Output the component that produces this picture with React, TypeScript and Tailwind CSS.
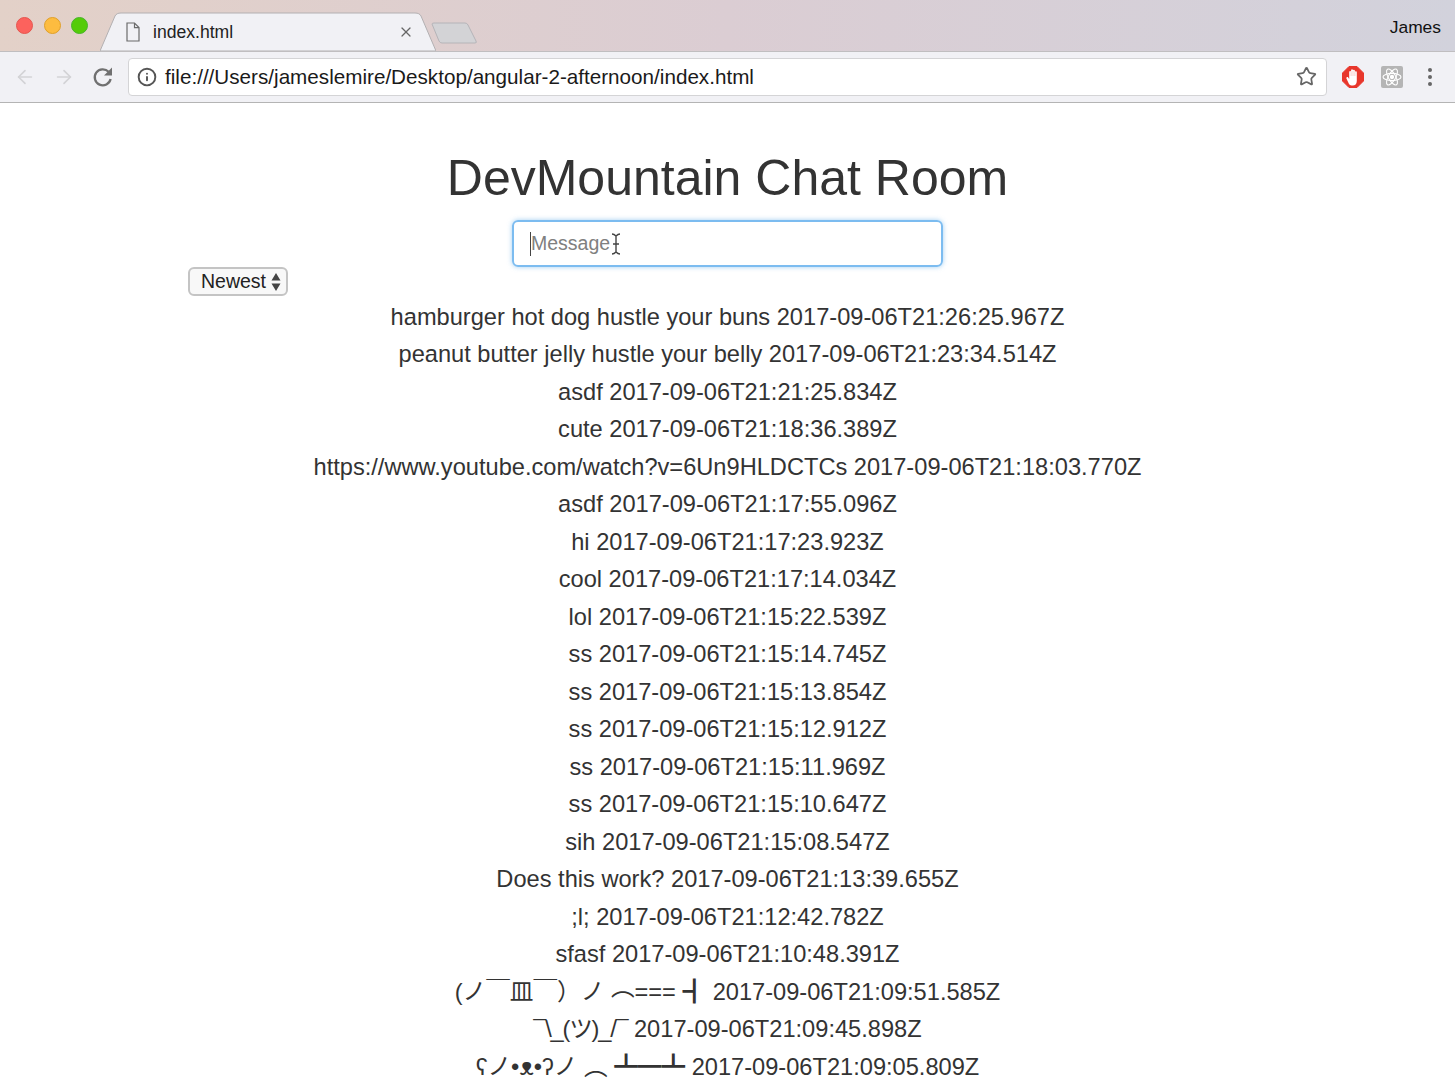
import { ArrowLeft, ArrowRight, Info, Star, X } from "lucide-react";

const messages = [
  "hamburger hot dog hustle your buns 2017-09-06T21:26:25.967Z",
  "peanut butter jelly hustle your belly 2017-09-06T21:23:34.514Z",
  "asdf 2017-09-06T21:21:25.834Z",
  "cute 2017-09-06T21:18:36.389Z",
  "https://www.youtube.com/watch?v=6Un9HLDCTCs 2017-09-06T21:18:03.770Z",
  "asdf 2017-09-06T21:17:55.096Z",
  "hi 2017-09-06T21:17:23.923Z",
  "cool 2017-09-06T21:17:14.034Z",
  "lol 2017-09-06T21:15:22.539Z",
  "ss 2017-09-06T21:15:14.745Z",
  "ss 2017-09-06T21:15:13.854Z",
  "ss 2017-09-06T21:15:12.912Z",
  "ss 2017-09-06T21:15:11.969Z",
  "ss 2017-09-06T21:15:10.647Z",
  "sih 2017-09-06T21:15:08.547Z",
  "Does this work? 2017-09-06T21:13:39.655Z",
  ";l; 2017-09-06T21:12:42.782Z",
  "sfasf 2017-09-06T21:10:48.391Z",
];

function TabShape() {
  return (
    <svg className="absolute inset-0" width="336" height="39" viewBox="0 0 336 39">
      <path
        d="M0 39 L15 4 C16 2 18 1 21 1 L315 1 C318 1 320 2 321 4 L336 39 Z"
        fill="#f1f1f5"
        stroke="#b3b0b2"
      />
    </svg>
  );
}

function ReloadIcon() {
  return (
    <svg width="24" height="24" viewBox="0 0 24 24" fill="none">
      <path d="M17.6 6.8 A8 8 0 1 0 19.6 14" stroke="#707070" strokeWidth="2.3" />
      <path d="M21 2.5 V10.5 H13 Z" fill="#707070" />
    </svg>
  );
}

function AdblockIcon() {
  return (
    <svg width="22" height="22" viewBox="0 0 22 22">
      <path d="M7 0.5 H15 L21.5 7 V15 L15 21.5 H7 L0.5 15 V7 Z" fill="#e8372c" stroke="#e8372c" strokeLinejoin="round" />
      <path
        d="M7 18 L4.4 12.4 C4 11.2 5.6 10.4 6.2 11.4 L7.2 13 V6 C7.2 4.8 9 4.8 9.1 6 V4.2 C9.1 3 10.9 3 11 4.2 V4.6 C11.1 3.6 12.8 3.6 12.9 4.8 V6 C13 5 14.8 5 14.8 6.2 V15 C14.8 18 13 19.6 10.8 19.6 C9 19.6 7.8 19.2 7 18 Z"
        fill="#ffffff"
      />
      <path d="M9.1 6 V10 M11 5 V10 M12.9 6 V10" stroke="#f0a09a" strokeWidth="0.5" />
    </svg>
  );
}

function ReactIcon() {
  return (
    <div className="flex h-[22px] w-[22px] items-center justify-center rounded-[2px] bg-[#b5b5b5]">
      <svg width="20" height="20" viewBox="0 0 20 20" fill="none" stroke="#ffffff" strokeWidth="1.1">
        <ellipse cx="10" cy="10" rx="9" ry="3.6" />
        <ellipse cx="10" cy="10" rx="9" ry="3.6" transform="rotate(60 10 10)" />
        <ellipse cx="10" cy="10" rx="9" ry="3.6" transform="rotate(120 10 10)" />
        <circle cx="10" cy="10" r="1.6" fill="#ffffff" />
      </svg>
    </div>
  );
}

function BrowserChrome() {
  return (
    <div className="font-['Liberation_Sans',sans-serif]">
      <div className="flex h-[52px] items-end justify-between border-b border-[#c0bec0] bg-gradient-to-r from-[#e3d1c8] via-[#dbcdd3] to-[#d2d2dc]">
        <div className="flex items-end">
          <div className="flex h-[39px] w-[100px] items-start gap-[10.5px] pl-[16px] pt-[5px]">
            <span className="h-[17px] w-[17px] shrink-0 rounded-full border border-[#e5564e] bg-[#fc625d]" />
            <span className="h-[17px] w-[17px] shrink-0 rounded-full border border-[#e0a028] bg-[#fdbc40]" />
            <span className="h-[17px] w-[17px] shrink-0 rounded-full border border-[#46b52a] bg-[#55cc08]" />
          </div>
          <div className="relative h-[39px] w-[336px]">
            <TabShape />
            <div className="relative flex h-full items-center pl-[26px] pr-[22px] pt-px">
              <svg width="14" height="20" viewBox="0 0 14 20" fill="none" stroke="#6b6b6b" strokeWidth="1.2">
                <path d="M1 1 H8.5 L13 5.6 V19 H1 Z M8.5 1 V5.6 H13" />
              </svg>
              <span className="ml-[13px] text-[17.6px] text-[#222]">index.html</span>
              <X className="ml-auto text-[#666]" size={16} strokeWidth={1.8} />
            </div>
          </div>
          <svg className="-ml-[6px] mb-[7px]" width="48" height="22" viewBox="0 0 48 22">
            <path d="M2 2 Q2 1 4 1 H35 Q37 1 38 3 L46 19 Q47 21 45 21 H12 Q10 21 9 19 Z" fill="#d3d3d6" stroke="#b5b4b8" />
          </svg>
        </div>
        <span className="mb-[11px] mr-[14px] text-[17.4px] text-[#111]">James</span>
      </div>
      <div className="flex h-[51px] items-center border-b border-[#b4b4b4] bg-[#f1f1f5] pb-[1px]">
        <div className="flex w-[128px] items-center gap-[17px] pl-[14px] shrink-0">
          <ArrowLeft size={22} strokeWidth={1.8} className="text-[#d3d3d6]" />
          <ArrowRight size={22} strokeWidth={1.8} className="text-[#d3d3d6]" />
          <div className="-ml-[1px]">
            <ReloadIcon />
          </div>
        </div>
        <div className="flex h-[38px] w-[1199px] items-center rounded-[4px] border border-[#d4d4d6] bg-white pl-[8px] pr-[9px]">
          <Info size={20} strokeWidth={2.3} className="text-[#555]" />
          <span className="ml-[8px] text-[20.67px] text-[#1a1a1a]">file:///Users/jameslemire/Desktop/angular-2-afternoon/index.html</span>
          <Star size={21} strokeWidth={2} className="ml-auto text-[#666]" />
        </div>
        <div className="ml-[15px] flex items-center">
          <AdblockIcon />
          <div className="ml-[17px]">
            <ReactIcon />
          </div>
          <div className="ml-[25px] flex flex-col gap-[3px]">
            <span className="h-[4px] w-[4px] rounded-full bg-[#666]" />
            <span className="h-[4px] w-[4px] rounded-full bg-[#666]" />
            <span className="h-[4px] w-[4px] rounded-full bg-[#666]" />
          </div>
        </div>
      </div>
    </div>
  );
}

export default function App() {
  return (
    <div className="h-[1080px] w-full overflow-hidden bg-white font-['Liberation_Sans','Noto_Sans_CJK_JP',sans-serif]">
      <BrowserChrome />
      <main className="flex flex-col">
        <h1 className="mt-[46px] h-[58px] text-center text-[50px] leading-[58px] text-[#333]">DevMountain Chat Room</h1>
        <div className="mt-[13px] flex justify-center">
          <div className="flex h-[47px] w-[431px] items-center rounded-[6px] border-2 border-[#7cbcf0] pl-[16px] shadow-[0_0_5px_rgba(102,175,233,0.6)]">
            <span className="h-[24px] w-px bg-[#444]" />
            <span className="text-[19.5px] text-[#808080]">Message</span>
            <svg className="ml-[1px]" width="10" height="22" viewBox="0 0 10 22" fill="none" stroke="#444" strokeWidth="1.4">
              <path d="M1 1 C3 1 4 2 5 3 C6 2 7 1 9 1 M5 3 V19 M1 21 C3 21 4 20 5 19 C6 20 7 21 9 21 M2 11 H8" />
            </svg>
          </div>
        </div>
        <div className="ml-[188px] flex h-[29px] w-[100px] items-center rounded-[6px] border-2 border-[#c4c4c4] bg-[#f8f8f8] pl-[11px]">
          <span className="text-[19.5px] text-[#222]">Newest</span>
          <svg className="ml-[5px]" width="10" height="20" viewBox="0 0 10 20" fill="#444">
            <path d="M5 1 L9.5 8.5 H0.5 Z M5 19 L0.5 11.5 H9.5 Z" />
          </svg>
        </div>
        <ul className="mt-[2.5px] flex flex-col text-center text-[23.63px] leading-[37.5px] text-[#333]">
          {messages.map((message, i) => (
            <li key={i} className="whitespace-nowrap">
              {message}
            </li>
          ))}
          <li className="whitespace-nowrap">
            (ノ￣皿￣）ノ <span className="inline-block translate-y-[12px]">⌒</span>=== ┫ 2017-09-06T21:09:51.585Z
          </li>
          <li className="whitespace-nowrap">
            <span className="tracking-[-1.2px]">¯\_(ツ)_/¯</span> 2017-09-06T21:09:45.898Z
          </li>
          <li className="whitespace-nowrap">ʕノ•ᴥ•ʔノ ︵ ┻━┻ 2017-09-06T21:09:05.809Z</li>
        </ul>
      </main>
    </div>
  );
}
